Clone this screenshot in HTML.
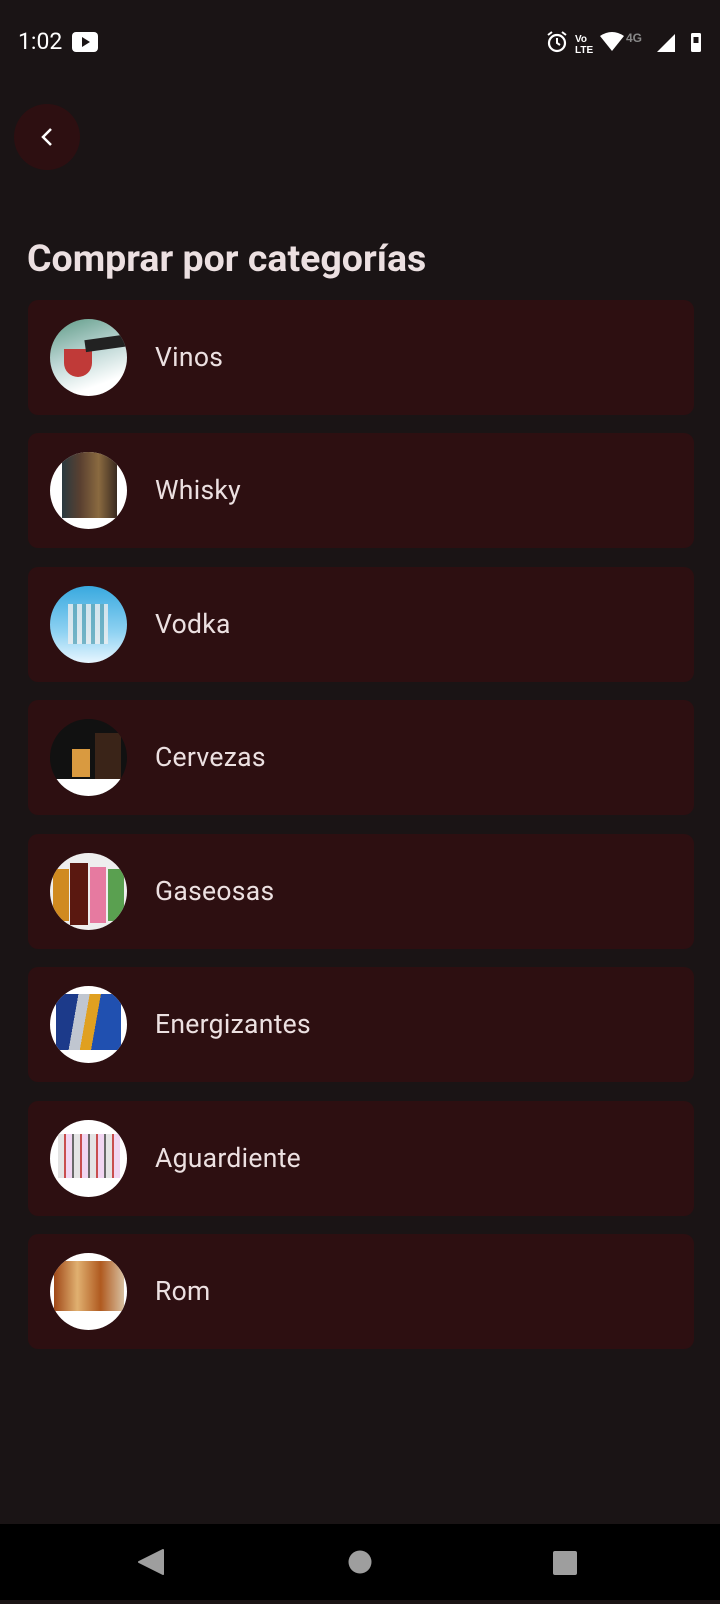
<!DOCTYPE html>
<html><head><meta charset="utf-8"><style>
*{margin:0;padding:0;box-sizing:border-box}
body{width:720px;height:1600px;background:#1a1415;font-family:"Roboto","Liberation Sans",sans-serif;color:#ece0e1;position:relative;overflow:hidden}
.sb{position:absolute;top:0;left:0;width:720px;height:80px}
.time{position:absolute;left:18px;top:28px;font-size:23px;color:#fff}
.back{position:absolute;left:14px;top:104px;width:66px;height:66px;border-radius:50%;background:#2d0f11}
h1{position:absolute;left:27px;top:237px;font-size:37.5px;font-weight:bold;color:#ece0e1;white-space:nowrap}
.card{position:absolute;left:28px;width:666px;height:115px;background:#2d0f11;border-radius:10px}
.av{position:absolute;left:22px;top:19px;width:77px;height:77px;border-radius:50%;background:#fff;overflow:hidden}
.lbl{position:absolute;left:127px;top:42px;font-size:26.5px;color:#ece0e1;letter-spacing:.3px}
.nav{position:absolute;top:1524px;left:0;width:720px;height:76px;background:#000}
</style></head><body>
<div class="sb">
<div class="time">1:02</div>
<svg style="position:absolute;left:72px;top:32px" width="26" height="20"><rect width="26" height="20" rx="4" fill="#fff"/><path d="M10 5l8 5-8 5z" fill="#1a1415"/></svg>
<svg style="position:absolute;left:545px;top:30px" width="160" height="26">
<circle cx="12" cy="13" r="8" fill="none" stroke="#fff" stroke-width="2.2"/><path d="M12 8v5l3 2" stroke="#fff" stroke-width="2" fill="none"/><path d="M3 5l4-3M21 5l-4-3" stroke="#fff" stroke-width="2"/>
<text x="30" y="12" font-size="10" fill="#fff" font-family="Liberation Sans" font-weight="bold">Vo</text><text x="30" y="23" font-size="10" fill="#fff" font-family="Liberation Sans" font-weight="bold">LTE</text>
<path d="M55 6 Q67 -2 79 6 L67 21z" fill="#fff"/>
<text x="81" y="12" font-size="12" fill="#888" font-family="Liberation Sans" font-weight="bold">4G</text>
<path d="M112 22L130 4V22z" fill="#fff"/>
<rect x="146" y="3" width="10" height="19" rx="1.5" fill="#fff"/><rect x="148.5" y="7" width="5" height="6" fill="#1a1415"/>
</svg>
</div>
<div class="back"><svg width="66" height="66"><path d="M37 25l-8 8 8 8" stroke="#fff" stroke-width="2.5" fill="none"/></svg></div>
<h1>Comprar por categorías</h1>

<div class="card" style="top:300px"><div class="av" style="background:linear-gradient(160deg,#5e9a86 0%,#bcd6d4 45%,#fff 80%)"><div style="position:absolute;left:14px;top:30px;width:28px;height:28px;border-radius:0 0 14px 14px;background:#c03a38"></div><div style="position:absolute;left:35px;top:18px;width:45px;height:12px;background:#222;transform:rotate(-8deg)"></div></div><div class="lbl">Vinos</div></div>
<div class="card" style="top:433px"><div class="av"><div style="position:absolute;left:12px;top:0;width:55px;height:66px;background:linear-gradient(90deg,#2a3a40,#5a4030,#8a6a40,#3a2a20)"></div></div><div class="lbl">Whisky</div></div>
<div class="card" style="top:567px"><div class="av" style="background:linear-gradient(180deg,#39a9df,#8fd2f2 60%,#e8f6ff)"><div style="position:absolute;left:18px;top:18px;width:40px;height:40px;background:repeating-linear-gradient(90deg,#eee 0 5px,#6ab 5px 9px);opacity:.8"></div></div><div class="lbl">Vodka</div></div>
<div class="card" style="top:700px"><div class="av" style="background:#111"><div style="position:absolute;left:22px;top:30px;width:18px;height:28px;background:#d99a40"></div><div style="position:absolute;left:45px;top:14px;width:26px;height:48px;background:#3a2418"></div><div style="position:absolute;left:0;top:60px;width:77px;height:17px;background:#fff"></div></div><div class="lbl">Cervezas</div></div>
<div class="card" style="top:834px"><div class="av" style="background:#eee"><div style="position:absolute;left:3px;top:16px;width:16px;height:52px;background:#d08a20"></div><div style="position:absolute;left:20px;top:10px;width:18px;height:62px;background:#5a1810"></div><div style="position:absolute;left:40px;top:14px;width:16px;height:56px;background:#e67aa0"></div><div style="position:absolute;left:58px;top:16px;width:16px;height:52px;background:#5aa050"></div></div><div class="lbl">Gaseosas</div></div>
<div class="card" style="top:967px"><div class="av"><div style="position:absolute;left:6px;top:8px;width:65px;height:56px;background:linear-gradient(100deg,#1c3a8a 0 30%,#c0c6d0 30% 45%,#e0a020 45% 60%,#2050b0 60%)"></div></div><div class="lbl">Energizantes</div></div>
<div class="card" style="top:1101px"><div class="av"><div style="position:absolute;left:8px;top:14px;width:62px;height:44px;background:repeating-linear-gradient(90deg,#ddd 0 6px,#b22 6px 8px,#ece 8px 14px,#444 14px 16px);opacity:.8"></div></div><div class="lbl">Aguardiente</div></div>
<div class="card" style="top:1234px"><div class="av"><div style="position:absolute;left:4px;top:8px;width:70px;height:50px;background:linear-gradient(90deg,#a04818,#e0b070,#b05a20,#d8c0a0)"></div></div><div class="lbl">Rom</div></div>

<div class="nav"><svg width="720" height="76">
<path d="M163 26L139 38L163 50z" fill="#9e9e9e" stroke="#9e9e9e" stroke-linejoin="round" stroke-width="2"/>
<circle cx="360" cy="38" r="11.5" fill="#9e9e9e"/>
<rect x="553" y="27" width="24" height="24" rx="2" fill="#9e9e9e"/>
</svg></div>
</body></html>
